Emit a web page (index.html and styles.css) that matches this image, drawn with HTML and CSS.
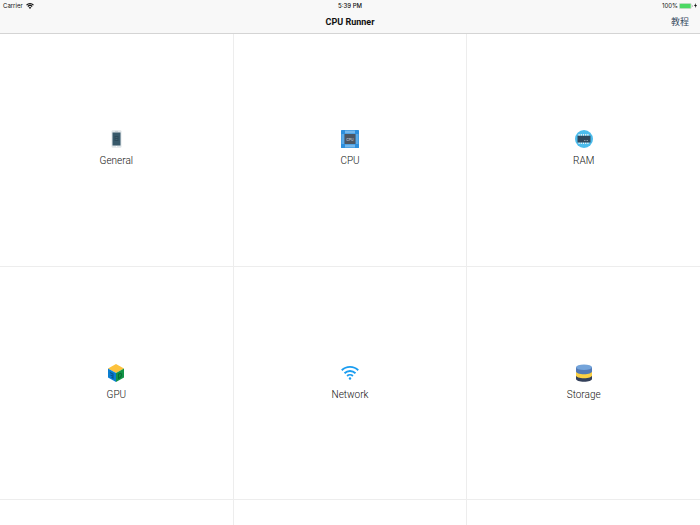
FILE: index.html
```html
<!DOCTYPE html>
<html lang="en">
<head>
  <meta charset="UTF-8" />
  <meta name="viewport" content="width=device-width, initial-scale=1.0"/>
  <title>CPU Runner</title>
  <link rel="stylesheet" href="styles.css">
</head>
<body>

  <header class="header">
    <div class="status-bar">
      <div class="status-left">
        <span>Carrier</span>
        <svg class="status-wifi" viewBox="0 0 16 12">
          <path d="M1 4.2a10 10 0 0 1 14 0M3.6 7a6.3 6.3 0 0 1 8.8 0" fill="none" stroke="#111" stroke-width="2.4"/>
          <path d="M8 12L5.3 9.2a3.9 3.9 0 0 1 5.4 0z" fill="#111"/>
        </svg>
      </div>
      <span class="status-time">5:39 PM</span>
      <div class="status-right">
        <span>100%</span>
        <svg class="status-battery" viewBox="0 0 28 12">
          <rect x="0.5" y="0.5" width="24" height="11" rx="2.5" fill="#fff" stroke="#aaa"/>
          <rect x="1.5" y="1.5" width="22" height="9" rx="1.5" fill="#4cd964"/>
          <path d="M26 4v4q1.5-.5 1.5-2T26 4z" fill="#999"/>
        </svg>
        <svg class="status-bolt" viewBox="0 0 6 10">
          <path d="M4 0L0 5.8h2.6L2 10l4-5.8H3.4z" fill="#111"/>
        </svg>
      </div>
    </div>
    <div class="nav-bar">
      <h1 class="nav-title">CPU Runner</h1>
      <button type="button" class="nav-button" lang="zh">教程</button>
    </div>
  </header>

  <main class="grid">
    <a class="cell" href="#general">
      <svg class="icon" viewBox="0 0 36 36">
        <rect x="9" y="0.5" width="20" height="35" rx="2.5" fill="#dfe5e8"/>
        <rect x="11" y="5" width="16" height="26" fill="#37596a"/>
        <path d="M15 12h8v10h-8z" fill="#2c4a5a"/>
        <path d="M17 15h4M17 19h4" stroke="#527483" stroke-width="1"/>
        <path d="M16 2.8h6" stroke="#a9b4ba" stroke-width="1"/>
        <circle cx="19" cy="33.2" r="1.3" fill="#fff"/>
      </svg>
      <span class="label">General</span>
    </a>
    <a class="cell" href="#cpu">
      <svg class="icon" viewBox="0 0 36 36">
        <rect width="36" height="36" rx="1" fill="#2d8fdd"/>
        <path d="M10 1v6M14 1v6M18 1v6M22 1v6M26 1v6M10 29v6M14 29v6M18 29v6M22 29v6M26 29v6" stroke="#a6d3f5" stroke-width="2.4"/>
        <path d="M1 10h6M1 14h6M1 18h6M1 22h6M1 26h6M29 10h6M29 14h6M29 18h6M29 22h6M29 26h6" stroke="#8bc5f1" stroke-width="2"/>
        <rect x="7" y="8" width="22" height="20" rx="1" fill="#4c5662"/>
        <text x="18" y="21" text-anchor="middle" class="chip-text">CPU</text>
      </svg>
      <span class="label">CPU</span>
    </a>
    <a class="cell" href="#ram">
      <svg class="icon" viewBox="0 0 36 36">
        <circle cx="18" cy="18" r="18" fill="#4cbcec"/>
        <path d="M7 10h22M7 26h22" stroke="#e8f4f9" stroke-width="4" stroke-dasharray="2.4 2"/>
        <rect x="5" y="11.5" width="26" height="13.5" fill="#2f475b"/>
        <path d="M18 21h9" stroke="#a5b4bf" stroke-width="1.5" stroke-dasharray="2 1"/>
      </svg>
      <span class="label">RAM</span>
    </a>
    <a class="cell" href="#gpu">
      <svg class="icon" viewBox="0 0 36 36">
        <path d="M18 0L34 9 18 18 2 9z" fill="#fdc23c"/>
        <path d="M2 9l16 9v18L2 27z" fill="#0b7ed0"/>
        <path d="M34 9l-16 9v18l16-9z" fill="#129447"/>
        <path d="M6 17l6 3v8l-3-1.5M7 22l5 2.5" fill="none" stroke="#075290" stroke-width="2.2"/>
        <path d="M23 20.5v8l3-1.5q3-2 3-5.5t-3-2.5z" fill="none" stroke="#076c31" stroke-width="2.2"/>
      </svg>
      <span class="label">GPU</span>
    </a>
    <a class="cell" href="#network">
      <svg class="icon" viewBox="0 0 36 36">
        <path d="M1.5 12.5a23.5 23.5 0 0 1 33 0M7 18.5a15.6 15.6 0 0 1 22 0M12.2 24a8.3 8.3 0 0 1 11.6 0" fill="none" stroke="#1b9df0" stroke-width="3.6"/>
        <circle cx="18" cy="29" r="2.4" fill="#1b9df0"/>
      </svg>
      <span class="label">Network</span>
    </a>
    <a class="cell" href="#storage">
      <svg class="icon" viewBox="0 0 36 36">
        <path d="M2 23v7c0 3 7 5.5 16 5.5S34 33 34 30v-7z" fill="#34405a"/>
        <path d="M2 15v8c0 3 7 5.5 16 5.5S34 26 34 23v-8z" fill="#fbd043"/>
        <path d="M2 6v9c0 3 7 5.5 16 5.5S34 18 34 15V6z" fill="#5279b5"/>
        <ellipse cx="18" cy="6.5" rx="16" ry="5.5" fill="#74a4da"/>
      </svg>
      <span class="label">Storage</span>
    </a>
    <div class="cell"></div>
    <div class="cell"></div>
    <div class="cell"></div>
  </main>

</body>
</html>
```
FILE: styles.css
```css
* {
  box-sizing: border-box;
}

body {
  margin: 0;
  height: 100vh;
  overflow: hidden;
  background: #fff;
  color: #111;
  font-family: Inter, "Noto Sans CJK SC", sans-serif;
}

.header {
  background: #f8f8f8;
  border-bottom: 1px solid #d4d4d4;
}

.status-bar,
.nav-bar {
  display: grid;
  grid-template-columns: 1fr auto 1fr;
  align-items: center;
}

.status-bar {
  height: 11px;
  padding: 0 3px;
  font-size: 6px;
  line-height: 11px;
}

.status-left,
.status-right {
  display: flex;
  align-items: center;
}

.status-left {
  gap: 3px;
}

.status-right {
  justify-content: flex-end;
  gap: 1px;
}

.status-time {
  font-weight: 500;
}

.status-wifi {
  width: 8px;
  height: 6px;
}

.status-battery {
  width: 14px;
  height: 6px;
}

.status-bolt {
  width: 3px;
  height: 5px;
}

.nav-bar {
  height: 22px;
  padding: 0 11px;
}

.nav-title {
  grid-column: 2;
  margin: 0;
  font-family: Roboto, sans-serif;
  font-size: 9px;
  font-weight: 700;
  line-height: 22px;
}

.nav-button {
  justify-self: end;
  padding: 0;
  border: none;
  background: none;
  color: #34495e;
  font-family: "Noto Sans CJK SC", sans-serif;
  font-size: 9px;
  line-height: 22px;
  cursor: pointer;
}

.grid {
  display: grid;
  grid-template-columns: repeat(3, 1fr);
  gap: 1px;
  margin-top: -1px;
  background: #ededed;
}

.header {
  position: relative;
}

.cell {
  display: flex;
  flex-direction: column;
  align-items: center;
  justify-content: center;
  gap: 6px;
  aspect-ratio: 1;
  padding-bottom: 1px;
  background: #fff;
  color: #111;
  text-decoration: none;
}

.icon {
  width: 18px;
  height: 18px;
}

.chip-text {
  fill: #b5bec8;
  font-size: 7px;
  font-weight: 600;
}

.label {
  font-family: Roboto, sans-serif;
  font-size: 10px;
  font-weight: 300;
  line-height: 14px;
}
```
